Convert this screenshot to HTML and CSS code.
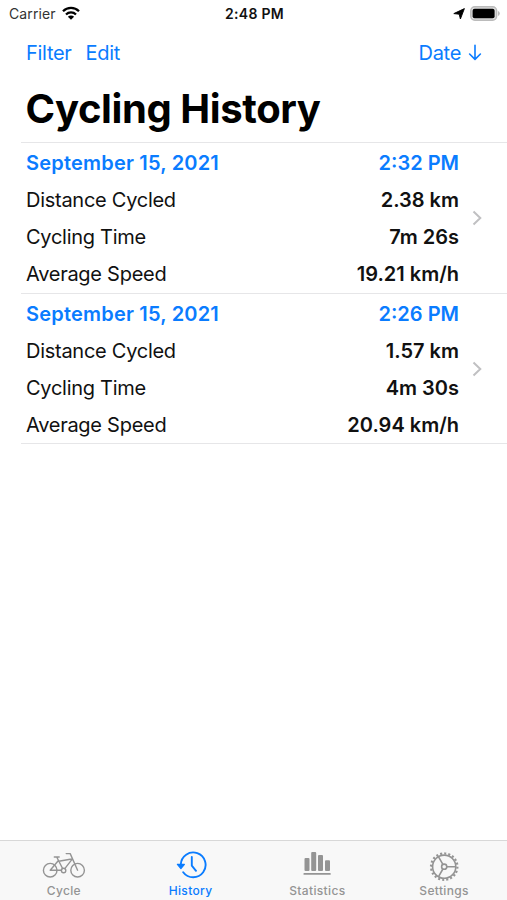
FILE: index.html
```html
<!DOCTYPE html>
<html lang="en">
<head>
<meta charset="utf-8"/>
<meta name="viewport" content="width=device-width, initial-scale=1.0"/>
<link rel="stylesheet" href="styles.css">
<title>Cycling History</title>
</head>
<body>
<div class="app">

<header class="status">
<div class="st-left"><span class="carrier">Carrier</span>
<svg class="wifi" width="18" height="14" viewBox="0 0 18 14" fill="none" stroke="#000" stroke-width="2.3"><path d="M1 5.2a11.4 11.4 0 0 1 16 0M4 8.5a7.1 7.1 0 0 1 10 0"/><path d="M9 13.7L5.9 10.7a4.4 4.4 0 0 1 6.2 0z" fill="#000" stroke="none"/></svg>
</div>
<div class="st-time">2:48 PM</div>
<div class="st-right">
<svg width="12" height="12" viewBox="0 0 12 12"><path d="M11.4.6L7.4 11 6.2 6.2.8 5.6z" stroke="#000" stroke-width=".9" stroke-linejoin="round"/></svg>
<svg width="30" height="15" viewBox="0 0 30 15"><rect x=".8" y=".8" width="25.8" height="13.4" rx="4" fill="#ddd" stroke="#bbb" stroke-width="1.5"/><rect x="2.6" y="2.8" width="22" height="9.4" rx="2"/><path d="M28 5q1.8.7 1.8 2.5T28 10z" fill="#bbb"/></svg>
</div>
</header>

<nav class="bar">
<a class="filter">Filter</a>
<a class="edit">Edit</a>
<a class="sort"><span class="date">Date</span><svg width="14" height="17" viewBox="0 0 14 17" fill="none" stroke="currentColor" stroke-width="1.6" stroke-linecap="round" stroke-linejoin="round"><path d="M7 1.3v14M1.6 10L7 15.4l5.4-5.4"/></svg></a>
</nav>

<h1 class="title"><span>Cycling History</span></h1>

<main class="list">
<section class="ride">
<dl class="rows">
<div class="row head"><dt class="day">September 15, 2021</dt><dd>2:32 PM</dd></div>
<div class="row"><dt>Distance Cycled</dt><dd>2.38 km</dd></div>
<div class="row"><dt>Cycling Time</dt><dd>7m 26s</dd></div>
<div class="row"><dt>Average Speed</dt><dd>19.21 km/h</dd></div>
</dl>
<svg class="chev" width="10" height="16" viewBox="0 0 10 16"><path d="M1.5 1.5L8.3 8l-6.8 6.5"/></svg>
</section>
<section class="ride">
<dl class="rows">
<div class="row head"><dt class="day">September 15, 2021</dt><dd>2:26 PM</dd></div>
<div class="row"><dt>Distance Cycled</dt><dd>1.57 km</dd></div>
<div class="row"><dt>Cycling Time</dt><dd>4m 30s</dd></div>
<div class="row"><dt>Average Speed</dt><dd>20.94 km/h</dd></div>
</dl>
<svg class="chev" width="10" height="16" viewBox="0 0 10 16"><path d="M1.5 1.5L8.3 8l-6.8 6.5"/></svg>
</section>
</main>

<footer class="tabs">
<a class="tab">
<svg width="44" height="32" viewBox="0 0 44 32" fill="none" stroke="currentColor" stroke-width="1.4" stroke-linejoin="round" stroke-linecap="round"><circle cx="8.2" cy="20.2" r="6.8"/><circle cx="35.6" cy="20.2" r="6.8"/><circle cx="21.6" cy="20.5" r="2.2"/><path d="M8.2 20.2L16 11M8.2 20.2h11.2M14.7 7l5.9 11.5M12.3 7h4.9M16.8 11.3L29.6 9M29.8 9.6L22.8 18.6M35.6 20.2L28.2 3.6h-4"/></svg>
<span>Cycle</span></a>
<a class="tab now">
<svg width="32" height="32" viewBox="0 0 32 32" fill="none" stroke="currentColor" stroke-width="1.9" stroke-linecap="round" stroke-linejoin="round"><path d="M5.8 14.5A12.4 12.4 0 1 1 8.2 22.2M16.8 7v8.6l4.2 5.2"/><path d="M2.4 14.3h7l-3.5 4.3z" fill="currentColor" stroke-width="1.2"/></svg>
<span>History</span></a>
<a class="tab">
<svg width="32" height="32" viewBox="0 0 32 32" fill="currentColor"><rect x="3.5" y="8" width="5" height="13" rx="1"/><rect x="10.2" y="2" width="5" height="19" rx="1"/><rect x="17" y="5" width="5" height="16" rx="1"/><rect x="24" y="10.3" width="5" height="10.7" rx="1"/><rect x="2.5" y="23" width="27.2" height="1.8" rx=".6"/></svg>
<span>Statistics</span></a>
<a class="tab">
<svg width="32" height="32" viewBox="0 0 32 32" fill="none" stroke="currentColor" stroke-width="1.6"><circle cx="16.2" cy="16.7" r="11.6"/><circle cx="16.2" cy="16.7" r="13.2" stroke-width="2.2" pathLength="80" stroke-dasharray="2 2"/><circle cx="16.2" cy="16.7" r="2.6"/><path d="M18.8 16.7h9M14.9 14.4l-4.5-7.8M14.9 19l-4.5 7.8"/></svg>
<span>Settings</span></a>
</footer>

</div>
</body>
</html>
```

FILE: styles.css
```css
*{box-sizing:border-box;}
body,h1,dl,dd{margin:0;padding:0;}
body{background:#fff;color:#111;font-family:Inter,"Liberation Sans",sans-serif;font-size:20px;}
svg{display:block;}

.app{display:flex;flex-direction:column;height:900px;overflow:hidden;}

/** status **/
.status{display:grid;grid-template-columns:1fr auto 1fr;align-items:center;height:27px;padding:0 7px 0 9px;font-size:14px;}
.st-left,.st-right{display:flex;align-items:center;}
.st-left{gap:6px;color:#333;letter-spacing:.1px;}
.wifi{margin-bottom:2px;}
.st-time{font-size:14px;font-weight:600;letter-spacing:.3px;}
.st-right{justify-content:flex-end;gap:5px;}

/** nav **/
.bar{display:flex;align-items:center;height:50px;padding:1px 25px 0 26px;color:#0a7cff;letter-spacing:-.3px;}
.edit{margin-left:14px;}
.sort{display:flex;align-items:center;gap:7px;margin-left:auto;}
.title{height:65px;padding-left:25.5px;line-height:63px;color:#000;font-size:40px;font-weight:700;letter-spacing:-.4px;}

/** list **/
.list{flex:1;padding-left:21px;}
.ride{display:flex;align-items:center;height:151px;padding:0 25px 0 5px;border-top:1px solid #e6e6e8;}
.ride:last-child{border-bottom:1px solid #e6e6e8;}
.rows{flex:1;padding-top:2px;}
.row{display:flex;justify-content:space-between;height:37px;line-height:37px;letter-spacing:-.27px;}
.row dd{font-weight:600;letter-spacing:0;}
.row .day{letter-spacing:.2px;}
.head{color:#0a7cff;font-weight:600;}
.chev{margin-left:13px;fill:none;stroke:#c0c0c2;stroke-width:2;}

/** tabs **/
.tabs{display:grid;grid-template-columns:repeat(4,1fr);height:60px;padding-top:9px;border-top:1px solid #d8d8d8;background:#f8f8f8;}
.tab{display:flex;flex-direction:column;align-items:center;padding-left:1px;color:#949494;font-size:12px;font-weight:500;line-height:18px;letter-spacing:.35px;}
.tab.now{color:#0a7cff;}
```
